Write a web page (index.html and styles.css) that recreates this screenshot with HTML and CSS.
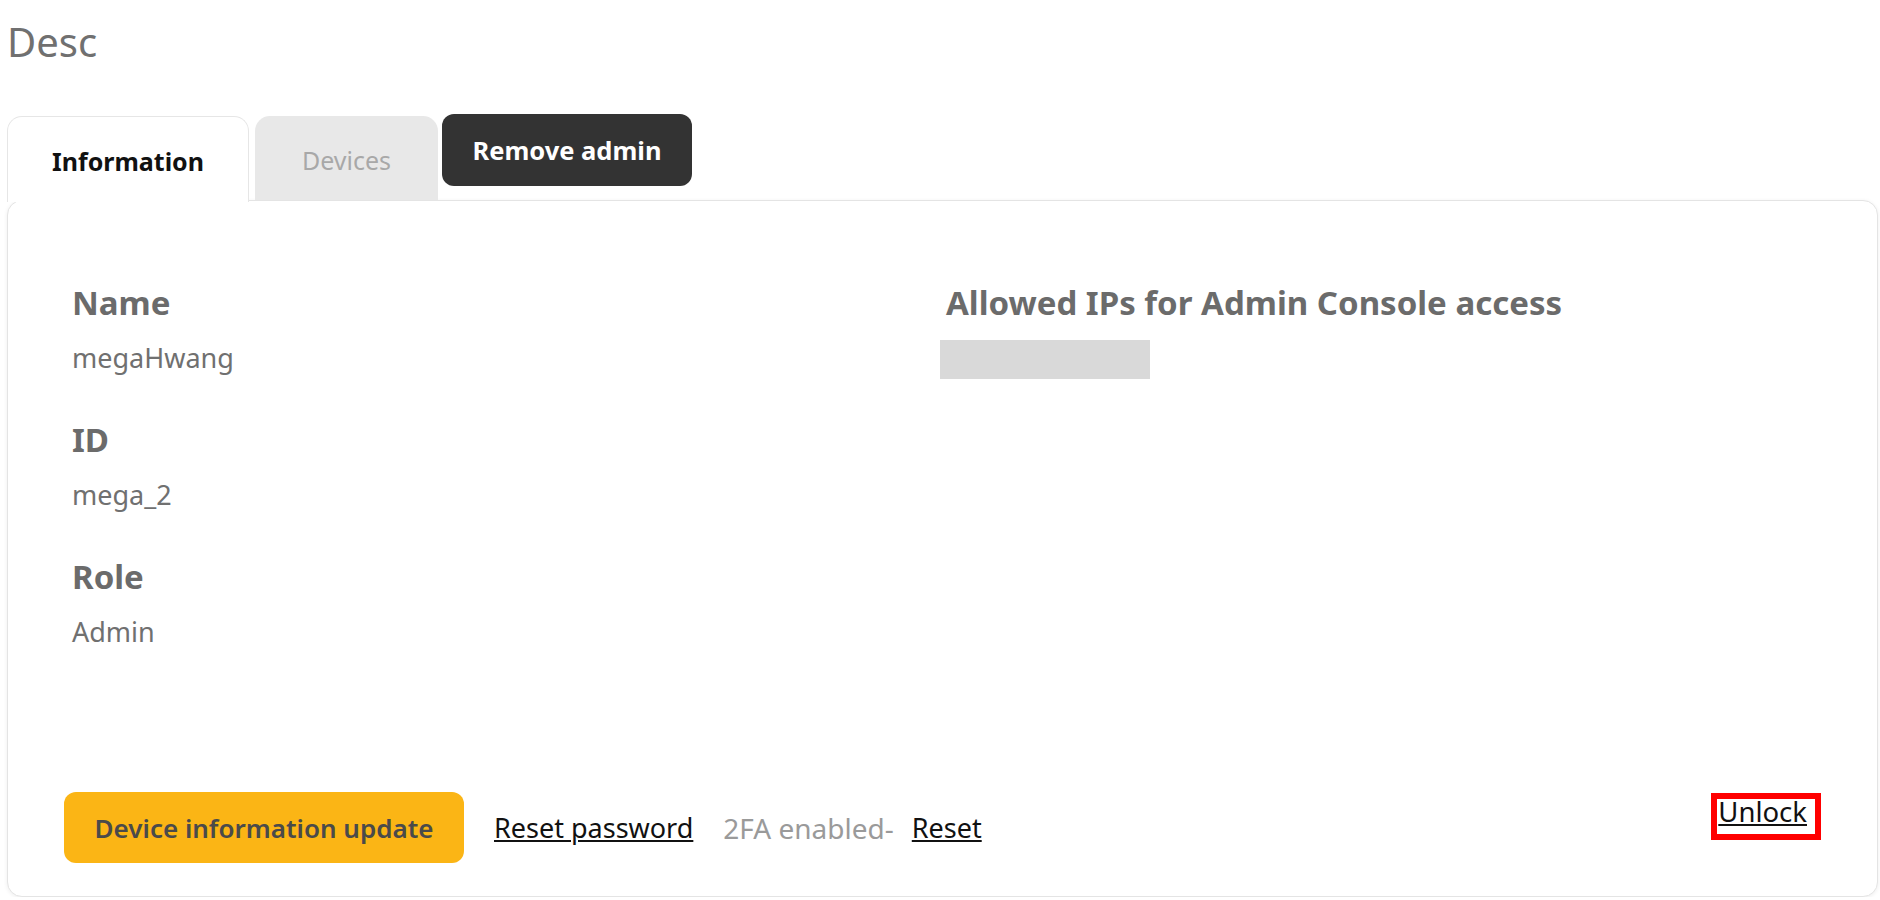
FILE: index.html
```html
<!DOCTYPE html>
<html lang="en">
<head>
    <meta charset="UTF-8">
    <title>Desc</title>
    <link rel="stylesheet" href="styles.css">
</head>
<body>
<div class="page">
    <h1 class="title">Desc</h1>
    <div class="tabs">
        <div class="tab tab_active">Information</div>
        <div class="tab">Devices</div>
        <button class="btn_remove" type="button">Remove admin</button>
    </div>
    <div class="panel">
        <div class="info">
            <div class="info_col">
                <div class="field">
                    <h3 class="label">Name</h3>
                    <p class="value">megaHwang</p>
                </div>
                <div class="field">
                    <h3 class="label">ID</h3>
                    <p class="value">mega_2</p>
                </div>
                <div class="field">
                    <h3 class="label">Role</h3>
                    <p class="value">Admin</p>
                </div>
            </div>
            <div class="info_col">
                <div class="field">
                    <h3 class="label">Allowed IPs for Admin Console access</h3>
                    <div class="ip_box"></div>
                </div>
            </div>
        </div>
        <div class="actions">
            <button class="btn_update" type="button">Device information update</button>
            <a class="link" href="#">Reset password</a>
            <span class="twofa">
                <span class="muted">2FA enabled-</span>
                <a class="link" href="#">Reset</a>
            </span>
            <a class="link unlock" href="#">Unlock</a>
        </div>
    </div>
</div>
</body>
</html>
```

FILE: styles.css
```css
*{
    padding: 0px;
    margin: 0px;
    box-sizing: border-box;
}
body{
    background: white;
    font-family: "Noto Sans", "Noto Sans CJK KR", sans-serif;
}
.page{
    padding: 0 2px 0 7px;
}
.title{
    margin-top: 18px;
    font-size: 40px;
    line-height: 48px;
    font-weight: normal;
    color: #707070;
}
.tabs{
    display: flex;
    align-items: flex-start;
    gap: 6px;
    margin-top: 48px;
}
.tab{
    margin-top: 2px;
    height: 84px;
    display: flex;
    align-items: center;
    justify-content: center;
    padding-top: 4px;
    font-size: 25px;
    border-radius: 15px 15px 0 0;
}
.tab_active{
    position: relative;
    z-index: 1;
    width: 242px;
    height: 86px;
    margin-bottom: -2px;
    padding-bottom: 2px;
    background: white;
    border: 1px solid #e6e6e6;
    border-bottom: none;
    font-weight: bold;
    color: #111;
}
.tab:nth-child(2){
    width: 183px;
    background: #e8e8e8;
    color: #a8a8a8;
}
.btn_remove{
    margin-left: -2px;
    width: 250px;
    height: 72px;
    border: none;
    border-radius: 12px;
    background: #333333;
    color: white;
    font-family: inherit;
    font-size: 25.5px;
    font-weight: bold;
}
.panel{
    height: 697px;
    display: flex;
    flex-direction: column;
    padding: 82px 56px 33px 56px;
    border: 1px solid #e4e4e4;
    border-radius: 15px;
    box-shadow: 0 1px 4px rgba(0,0,0,0.07);
    background: white;
}
.info{
    display: grid;
    grid-template-columns: 874px 1fr;
    padding-left: 8px;
}
.field{
    margin-bottom: 42px;
}
.label{
    font-size: 33px;
    line-height: 40px;
    font-weight: bold;
    color: #6b6b6b;
}
.value{
    margin-top: 15px;
    font-size: 27px;
    line-height: 40px;
    color: #707070;
}
.ip_box{
    margin-top: 17px;
    margin-left: -6px;
    width: 210px;
    height: 39px;
    background: #d9d9d9;
}
.actions{
    margin-top: auto;
    display: flex;
    align-items: center;
    gap: 30px;
}
.btn_update{
    width: 400px;
    height: 71px;
    border: none;
    border-radius: 12px;
    background: #fbb515;
    color: #4a4a4a;
    font-family: inherit;
    font-size: 26px;
    font-weight: 600;
}
.link{
    color: #111;
    font-size: 27px;
    text-decoration: underline;
}
.twofa{
    display: flex;
    gap: 18px;
}
.muted{
    color: #9a9a9a;
    font-size: 28px;
}
.unlock{
    align-self: flex-start;
    margin-left: auto;
    margin-top: 1px;
    padding: 0 8px 10px 1px;
    line-height: 25px;
    font-size: 27.5px;
    border: 6px solid #ff0000;
}
```
